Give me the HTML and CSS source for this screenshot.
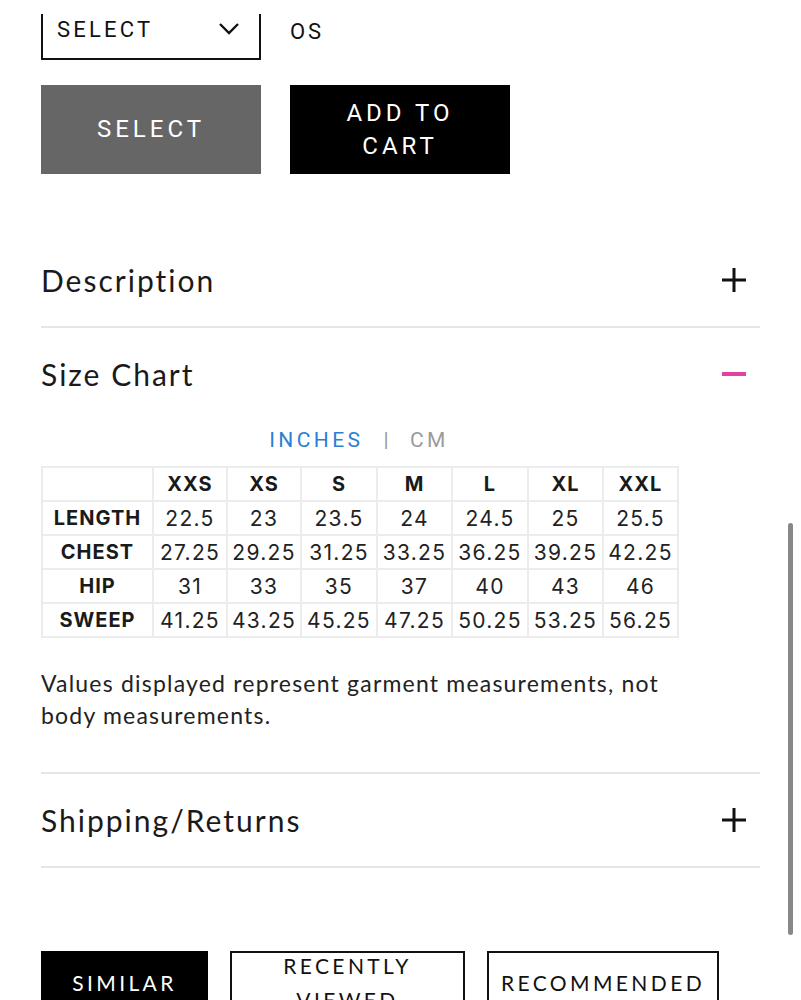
FILE: index.html
```html
<!DOCTYPE html>
<html lang="en">
<head>
<meta charset="utf-8">
<title>Product</title>
<link rel="stylesheet" href="styles.css">
</head>
<body>
<div class="page">
  <div class="options">
    <div class="select-box">
      <span>SELECT</span>
      <svg class="chev" width="22" height="14" viewBox="0 0 22 14"><path d="M2 2 L11 11 L20 2" fill="none" stroke="#111" stroke-width="2.4"/></svg>
    </div>
    <div class="os">OS</div>
  </div>
  <div class="buttons">
    <div class="btn btn-gray">SELECT</div>
    <div class="btn btn-black">ADD TO<br>CART</div>
  </div>

  <div class="accordion">
    <div class="acc-head">
      <span class="acc-title">Description</span>
      <svg class="icon" width="26" height="26" viewBox="0 0 26 26"><path d="M13 1 V25 M1 13 H25" stroke="#111" stroke-width="3"/></svg>
    </div>
    <div class="acc-item">
      <div class="acc-head">
        <span class="acc-title">Size Chart</span>
        <svg class="icon" width="26" height="26" viewBox="0 0 26 26"><path d="M1 13 H25" stroke="#e0449f" stroke-width="4"/></svg>
      </div>
      <div class="units"><span class="unit active">INCHES</span><span class="sep">|</span><span class="unit">CM</span></div>
      <table class="chart">
        <colgroup><col class="c0"><col class="c1"><col class="c2"><col class="c3"><col class="c4"><col class="c5"><col class="c6"><col class="c7"></colgroup>
        <tr><th></th><th>XXS</th><th>XS</th><th>S</th><th>M</th><th>L</th><th>XL</th><th>XXL</th></tr>
        <tr><th>LENGTH</th><td>22.5</td><td>23</td><td>23.5</td><td>24</td><td>24.5</td><td>25</td><td>25.5</td></tr>
        <tr><th>CHEST</th><td>27.25</td><td>29.25</td><td>31.25</td><td>33.25</td><td>36.25</td><td>39.25</td><td>42.25</td></tr>
        <tr><th>HIP</th><td>31</td><td>33</td><td>35</td><td>37</td><td>40</td><td>43</td><td>46</td></tr>
        <tr><th>SWEEP</th><td>41.25</td><td>43.25</td><td>45.25</td><td>47.25</td><td>50.25</td><td>53.25</td><td>56.25</td></tr>
      </table>
      <p class="note">Values displayed represent garment measurements, not body measurements.</p>
    </div>
    <div class="acc-head">
      <span class="acc-title">Shipping/Returns</span>
      <svg class="icon" width="26" height="26" viewBox="0 0 26 26"><path d="M13 1 V25 M1 13 H25" stroke="#111" stroke-width="3"/></svg>
    </div>
  </div>

  <div class="tabs">
    <div class="tab tab-active">SIMILAR</div>
    <div class="tab tab-two">RECENTLY<br>VIEWED</div>
    <div class="tab tab-three">RECOMMENDED</div>
  </div>
</div>
<div class="top-cover"></div>
<div class="scrollbar"></div>
</body>
</html>
```
FILE: styles.css
```css
html, body {
  margin: 0;
  padding: 0;
  background: #fff;
  overflow: hidden;
}
body {
  font-family: "Roboto", "Liberation Sans", sans-serif;
  color: #111;
}
.page {
  display: flow-root;
  padding: 0 41px;
  width: 719px;
}
.options {
  display: flex;
  align-items: center;
  gap: 29px;
  margin-top: -10px;
}
.select-box {
  box-sizing: border-box;
  width: 220px;
  height: 70px;
  border: 2px solid #111;
  display: flex;
  align-items: center;
  justify-content: space-between;
  padding: 8px 19px 0 14px;
  font-size: 22px;
  letter-spacing: 3.2px;
}
.os {
  font-size: 22px;
  letter-spacing: 2.8px;
  padding-top: 12px;
}
.buttons {
  display: flex;
  gap: 29px;
  margin-top: 25px;
}
.btn {
  box-sizing: border-box;
  width: 220px;
  height: 89px;
  display: flex;
  align-items: center;
  justify-content: center;
  text-align: center;
  color: #fff;
  font-size: 24px;
  letter-spacing: 4px;
  line-height: 33px;
}
.btn-gray { background: #666; }
.btn-black { background: #000; }

.accordion {
  margin-top: 60px;
  font-family: "Lato", "Noto Sans", sans-serif;
}
.acc-head {
  display: flex;
  justify-content: space-between;
  align-items: center;
  height: 92px;
  border-bottom: 2px solid #e6e6e6;
}
.acc-item .acc-head { border-bottom: none; }
.acc-item {
  border-bottom: 2px solid #e6e6e6;
  padding-bottom: 41px;
}
.acc-title {
  font-size: 30px;
  letter-spacing: 2px;
  color: #1a1a1a;
}
.icon { margin-right: 13px; }

.units {
  width: 636px;
  text-align: center;
  font-family: "Roboto", "Liberation Sans", sans-serif;
  font-size: 21px;
  line-height: 24px;
  letter-spacing: 3.4px;
  color: #9a9a9a;
  margin-top: 8px;
}
.unit.active { color: #2b7fd4; }
.sep { margin: 0 18px 0 20px; color: #9a9a9a; }

.chart {
  border-collapse: collapse;
  margin-top: 14px;
  font-family: "Inter", "Roboto", sans-serif;
  color: #222;
  table-layout: fixed;
}
.c0 { width: 111px; }
.c1, .c2 { width: 74px; }
.c3, .c5 { width: 76px; }
.c4, .c6, .c7 { width: 75px; }
.chart tr { height: 34px; }
.chart th, .chart td {
  border: 2px solid #ececec;
  padding: 0;
  text-align: center;
  white-space: nowrap;
}
.chart th { font-size: 20px; font-weight: 700; letter-spacing: 1px; color: #1a1a1a; }
.chart td { font-size: 21px; font-weight: 400; letter-spacing: 1.3px; }

.note {
  margin: 29px 0 0 0;
  font-size: 23px;
  line-height: 32px;
  letter-spacing: 1.2px;
  color: #222;
  width: 650px;
}

.tabs {
  display: flex;
  gap: 22px;
  margin-top: 83px;
  font-family: "Lato", "Noto Sans", sans-serif;
}
.tab {
  box-sizing: border-box;
  height: 64px;
  display: flex;
  align-items: center;
  justify-content: center;
  text-align: center;
  font-size: 21px;
  letter-spacing: 3.4px;
  line-height: 34px;
}
.tab-active { width: 167px; background: #000; color: #fff; }
.tab-two { width: 235px; border: 2px solid #111; }
.tab-three { width: 232px; border: 2px solid #111; }

.top-cover {
  position: fixed;
  left: 0;
  top: 0;
  width: 100%;
  height: 14px;
  background: #fff;
}
.scrollbar {
  position: fixed;
  right: 8px;
  top: 523px;
  width: 5px;
  height: 412px;
  border-radius: 3px;
  background: #888;
}
```
